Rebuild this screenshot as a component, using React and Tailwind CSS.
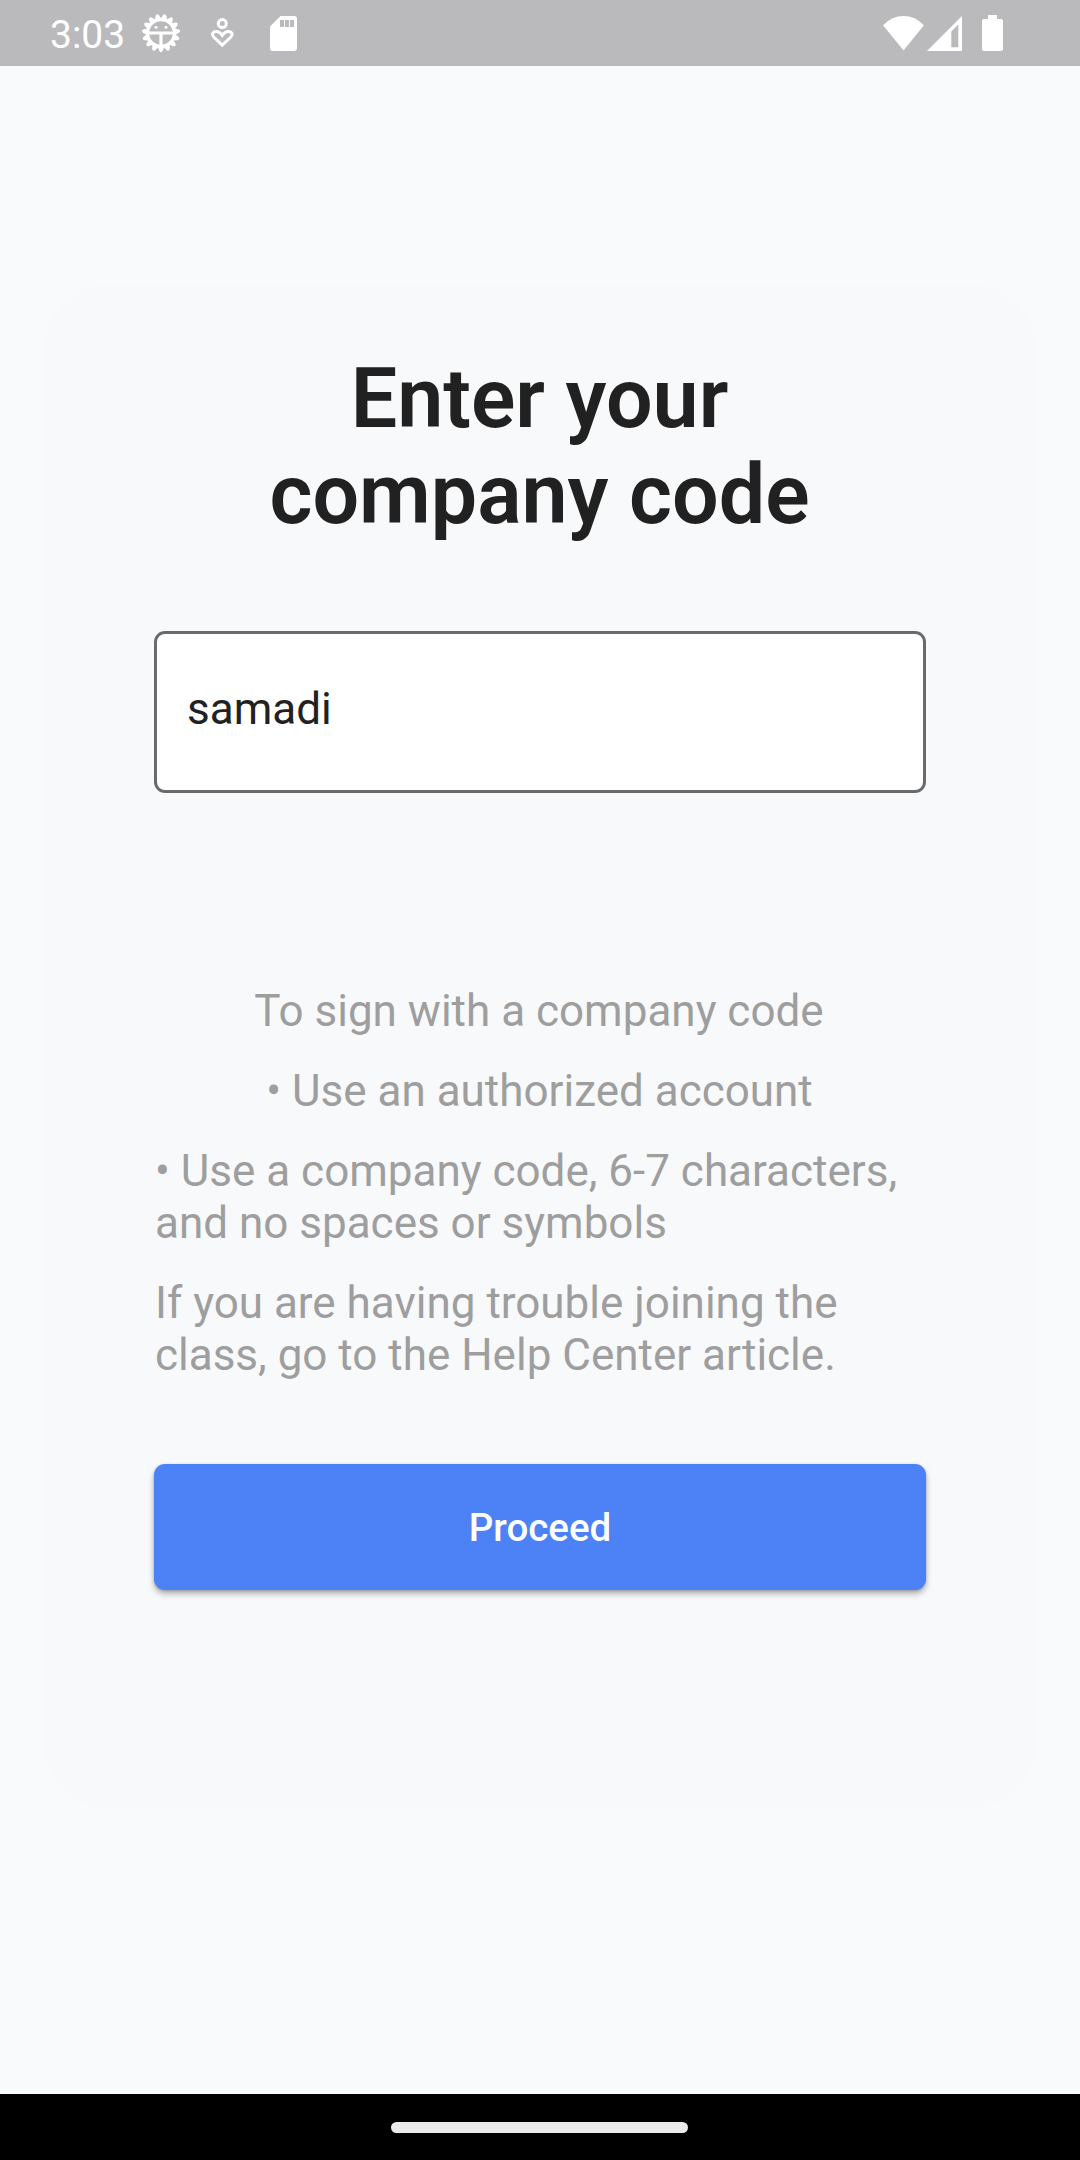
import React from "react";

const teeth = Array.from({ length: 15 }, (_, i) => i * 24 + 180);

function SunFaceIcon() {
  return (
    <svg className="ml-[15px] h-[40px] w-[40px]" viewBox="0 0 40 40" fill="none">
      <g fill="#fff">
        {teeth.map((a) => (
          <path key={a} d="M16.4 7 L18.3 2 Q20 -.4 21.7 2 L23.6 7Z" transform={`rotate(${a} 20 20)`} />
        ))}
      </g>
      <circle cx="20" cy="20" r="13.4" stroke="#fff" strokeWidth="3.2" />
      <path d="M7 20H33M20 20V33" stroke="#fff" strokeWidth="3.2" />
      <circle cx="15" cy="14.2" r="1.5" fill="#fff" />
      <circle cx="25" cy="14.2" r="1.5" fill="#fff" />
    </svg>
  );
}

function PersonHeartIcon() {
  return (
    <svg className="ml-[29px] h-[34px] w-[24px]" viewBox="0 0 24 34" fill="none" stroke="#fff" strokeWidth="3">
      <circle cx="12.3" cy="7.6" r="4" />
      <path d="M12.3 29.2 L4.2 21.5 C.8 17.9 3 15.4 6.6 15.4 C9.2 15.4 10.8 17.2 12.3 19.4 C13.8 17.2 15.4 15.4 18 15.4 C21.6 15.4 23.8 17.9 20.4 21.5Z" />
    </svg>
  );
}

function SdCardIcon() {
  return (
    <svg className="ml-[36px] h-[35px] w-[27px]" viewBox="0 0 27 35">
      <path
        fill="#fff"
        fillRule="evenodd"
        d="M10.5 0H24Q27 0 27 3V32Q27 35 24 35H3Q0 35 0 32V10.5ZM10 4V11H14V4ZM15 4V11H19V4ZM20 4V11H24V4Z"
      />
    </svg>
  );
}

function StatusBar() {
  return (
    <header className="flex h-[66px] shrink-0 items-center bg-[#bababc] pr-[77px] pl-[50px] text-white">
      <span className="mt-[3px] w-[76px] text-[39px] leading-[46px]">3:03</span>
      <SunFaceIcon />
      <PersonHeartIcon />
      <SdCardIcon />
      <div className="ml-auto flex items-center">
        <svg className="h-[35px] w-[41px]" viewBox="0 0 41 35" fill="#fff">
          <path d="M0 9.3 Q9 0 20.5 0 Q32 0 41 9.3L20.5 34.5Z" />
        </svg>
        <svg className="ml-[3px] h-[35px] w-[35px]" viewBox="0 0 35 35" fill="#fff">
          <path fillRule="evenodd" d="M35 0V35H0ZM31.3 8.5L24.3 15.5V31.3H31.3Z" />
        </svg>
        <svg className="ml-[20px] h-[36px] w-[21px]" viewBox="0 0 21 36" fill="#fff">
          <path d="M6 0H15V4H19Q21 4 21 6V34Q21 36 19 36H2Q0 36 0 34V6Q0 4 2 4H6Z" />
        </svg>
      </div>
    </header>
  );
}

export default function App() {
  return (
    <div className="flex h-[2160px] w-[1080px] flex-col bg-[#f9fafc] font-[Roboto,sans-serif]">
      <StatusBar />
      <main className="flex-1 px-[44px] pt-[218px]">
        <section className="flex h-[1525px] flex-col rounded-[66px] bg-[#f8f9fb] px-[110px] pt-[67px]">
          <h1 className="pr-px text-center text-[82.5px] leading-[96px] font-semibold text-[#212121]">
            Enter your
            <br />
            company code
          </h1>
          <input
            aria-label="Company code"
            defaultValue="samadi"
            className="mt-[88px] h-[162px] w-full rounded-[11px] border-3 border-[#6b6b6c] bg-white px-[30px] pb-[6px] text-[44px] text-[#212121] outline-none"
          />
          <div className="mt-[192px] flex flex-col gap-[28px] pl-px text-[44px] leading-[52px] text-[#9e9e9e]">
            <p className="pr-[3px] text-center">To sign with a company code</p>
            <p className="pr-[2px] text-center">• Use an authorized account</p>
            <p>
              • Use a company code, 6-7 characters,
              <br />
              and no spaces or symbols
            </p>
            <p>
              If you are having trouble joining the
              <br />
              class, go to the Help Center article.
            </p>
          </div>
          <button className="mt-[83px] h-[126px] w-full rounded-[11px] bg-[#4d82f7] pt-[2px] text-[38.5px] font-medium text-white shadow-[0_4px_6px_rgba(0,0,0,0.28),0_1px_3px_rgba(0,0,0,0.18)]">
            Proceed
          </button>
        </section>
      </main>
      <footer className="flex h-[66px] shrink-0 items-center justify-center bg-black pr-[2px]">
        <div className="h-[11px] w-[297px] rounded-full bg-[#ebebeb]" />
      </footer>
    </div>
  );
}
